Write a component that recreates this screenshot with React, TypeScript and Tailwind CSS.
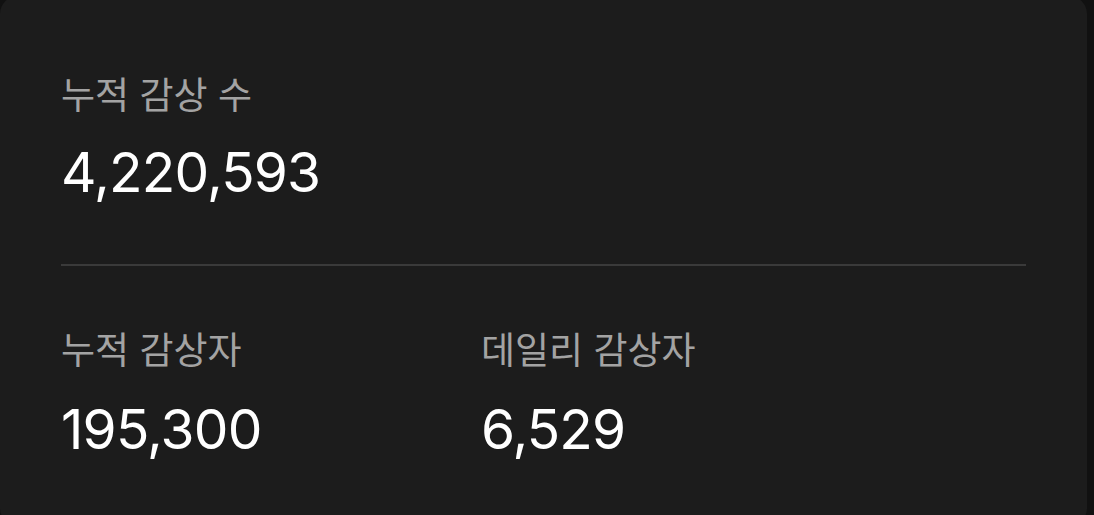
import React from "react";

type Stat = { label: string; value: string; gap: string };

function StatBlock({ label, value, gap }: Stat) {
  return (
    <div className="flex flex-col">
      <div className="text-[37px] leading-[44px] text-[#a3a3a3]">{label}</div>
      <div className={`${gap} text-[55px] leading-[56px] text-white font-normal tracking-[-0.8px]`}>{value}</div>
    </div>
  );
}

export default function App() {
  return (
    <div
      className="w-[1094px] h-[515px] bg-[#111111] overflow-hidden"
      style={{ fontFamily: '"Inter", "Noto Sans CJK KR", sans-serif' }}
    >
      <div className="w-[1087px] h-[530px] -mt-[4px] bg-[#1c1c1c] rounded-[18px] px-[61px] pt-[78px]">
        <StatBlock label="누적 감상 수" value="4,220,593" gap="mt-[26px]" />
        <div className="mt-[64px] h-[2px] bg-[#3a3a3a]" />
        <div className="mt-[63px] grid grid-cols-[420px_1fr]">
          <StatBlock label="누적 감상자" value="195,300" gap="mt-[28px]" />
          <StatBlock label="데일리 감상자" value="6,529" gap="mt-[28px]" />
        </div>
      </div>
    </div>
  );
}
